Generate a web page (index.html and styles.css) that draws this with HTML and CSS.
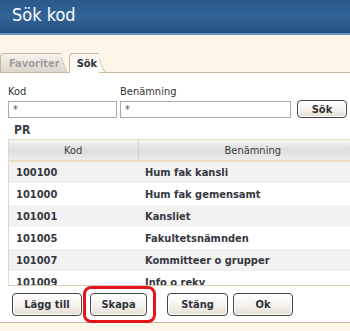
FILE: index.html
```html
<!DOCTYPE html>
<html lang="sv">
<head>
  <meta charset="UTF-8">
  <title>Sök kod</title>
  <link rel="stylesheet" href="styles.css">
</head>
<body>
  <div class="title-bar">Sök kod</div>

  <!-- Flikar -->
  <div class="tabs">
    <div class="tab">Favoriter</div>
    <div class="tab active">Sök</div>
  </div>

  <div class="panel">
    <div class="search-form">
      <label class="lbl">Kod</label>
      <label class="lbl">Benämning</label>
      <span></span>
      <input class="field" type="text" value="*">
      <input class="field" type="text" value="*">
      <button class="btn btn-search">Sök</button>
    </div>

    <div class="group">PR</div>

    <div class="grid-wrap">
      <table class="grid">
        <thead>
          <tr><th class="col-kod">Kod</th><th class="col-name">Benämning</th></tr>
        </thead>
        <tbody>
          <tr><td>100100</td><td>Hum fak kansli</td></tr>
          <tr><td>101000</td><td>Hum fak gemensamt</td></tr>
          <tr><td>101001</td><td>Kansliet</td></tr>
          <tr><td>101005</td><td>Fakultetsnämnden</td></tr>
          <tr><td>101007</td><td>Kommitteer o grupper</td></tr>
          <tr><td>101009</td><td>Info o rekv</td></tr>
        </tbody>
      </table>
    </div>

    <div class="actions">
      <button class="btn btn-add">Lägg till</button>
      <div class="highlight">
        <button class="btn btn-create">Skapa</button>
      </div>
      <button class="btn btn-close">Stäng</button>
      <button class="btn btn-ok">Ok</button>
    </div>
  </div>
</body>
</html>
```

FILE: styles.css
```css
* {
  box-sizing: border-box;
}
body {
  margin: 0;
  background-color: #fdf5e8;
  font-family: "DejaVu Sans Condensed", "DejaVu Sans", Tahoma, sans-serif;
  font-size: 11px;
  color: #34383f;
}
.title-bar {
  height: 35px;
  padding: 3px 0 0 12px;
  background: linear-gradient(#2b5989, #326498 45%, #2a5888 80%, #23507e);
  border-bottom: 2px solid #6b91bb;
  color: white;
  font-size: 18px;
  line-height: 24px;
}
.tabs {
  height: 38px;
  display: flex;
  align-items: flex-end;
  border-bottom: 1px solid #c9b99e;
}
.tab {
  position: relative;
  height: 19px;
  padding: 0 1px 0 8px;
  margin-right: 8px;
  line-height: 19px;
  font-weight: bold;
  color: #a3a09c;
  background: linear-gradient(#f6f3ee, #dcd5ca);
  border-top: 1px solid #c4b69f;
  border-left: 1px solid #c4b69f;
  border-top-left-radius: 4px;
}
.tab::after {
  content: "";
  position: absolute;
  z-index: -1;
  top: -1px;
  right: -7px;
  width: 10px;
  height: 19px;
  background: linear-gradient(#f6f3ee, #dcd5ca);
  border-top: 1px solid #c4b69f;
  border-right: 1px solid #c4b69f;
  border-top-right-radius: 3px;
  transform: skewX(22deg);
  transform-origin: bottom left;
}
.tab.active {
  color: #2f3338;
  background: linear-gradient(#fbf6ee, #ffffff);
  height: 20px;
  margin-bottom: -1px;
  padding: 0 2px 0 7px;
}
.tab.active::after {
  height: 20px;
  background: linear-gradient(#fbf6ee, #ffffff);
}
.panel {
  background-color: white;
  border-bottom: 1px solid #c9b99e;
  padding-top: 12px;
}
.search-form {
  display: grid;
  grid-template-columns: 109px 171px 50px;
  column-gap: 3px;
  padding-left: 8px;
}
.lbl {
  line-height: 13px;
  padding-bottom: 3px;
  color: #333;
}
.field {
  height: 17px;
  border: 1px solid #a7adad;
  padding: 0 0 0 4px;
  font-family: inherit;
  font-size: 11px;
  color: #555;
  outline: none;
}
.btn {
  height: 23px;
  border: 1px solid #444;
  border-radius: 4px;
  background: linear-gradient(#ffffff, #f3f0ea 60%, #e2ddd3);
  box-shadow: inset 0 0 0 1px #fff;
  font-family: inherit;
  font-size: 11px;
  font-weight: bold;
  color: #2f3338;
  padding: 0;
}
.btn-search {
  height: 18px;
  margin: -1px 0 0 3px;
  width: 50px;
}
.group {
  padding: 5px 0 0 14px;
  height: 21px;
  font-weight: bold;
  font-size: 12px;
  color: #3c3f44;
}
.grid-wrap {
  margin-left: 8px;
  height: 147px;
  overflow: hidden;
  border-left: 1px solid #e6d8c0;
  border-top: 1px solid #eadcc3;
  border-bottom: 1px solid #d8cbb4;
}
.grid {
  border-collapse: collapse;
  width: 358px;
}
.grid th {
  height: 21px;
  font-weight: normal;
  color: #3a3d42;
  background: linear-gradient(#f5f5f5, #dedede 50%, #ececec);
  border-bottom: 2px solid #eadcc3;
  padding: 0;
}
.col-kod {
  width: 129px;
  border-right: 1px solid #d0d0d0;
}
.grid td {
  height: 22px;
  padding: 0 0 0 7px;
  font-weight: bold;
  color: #34383f;
}
.grid tbody tr:nth-child(odd) td {
  background-color: #f2f2f2;
}
.actions {
  display: flex;
  align-items: center;
  height: 36px;
  padding-left: 12px;
}
.btn-add {
  width: 70px;
}
.highlight {
  flex: none;
  margin-left: 1px;
  padding: 4px 6px 4px 4px;
  border: 3px solid #e3141c;
  border-radius: 8px;
}
.btn-create {
  display: block;
  width: 57px;
}
.btn-close {
  width: 61px;
  margin-left: 11px;
}
.btn-ok {
  width: 60px;
  margin-left: 5px;
}
```
